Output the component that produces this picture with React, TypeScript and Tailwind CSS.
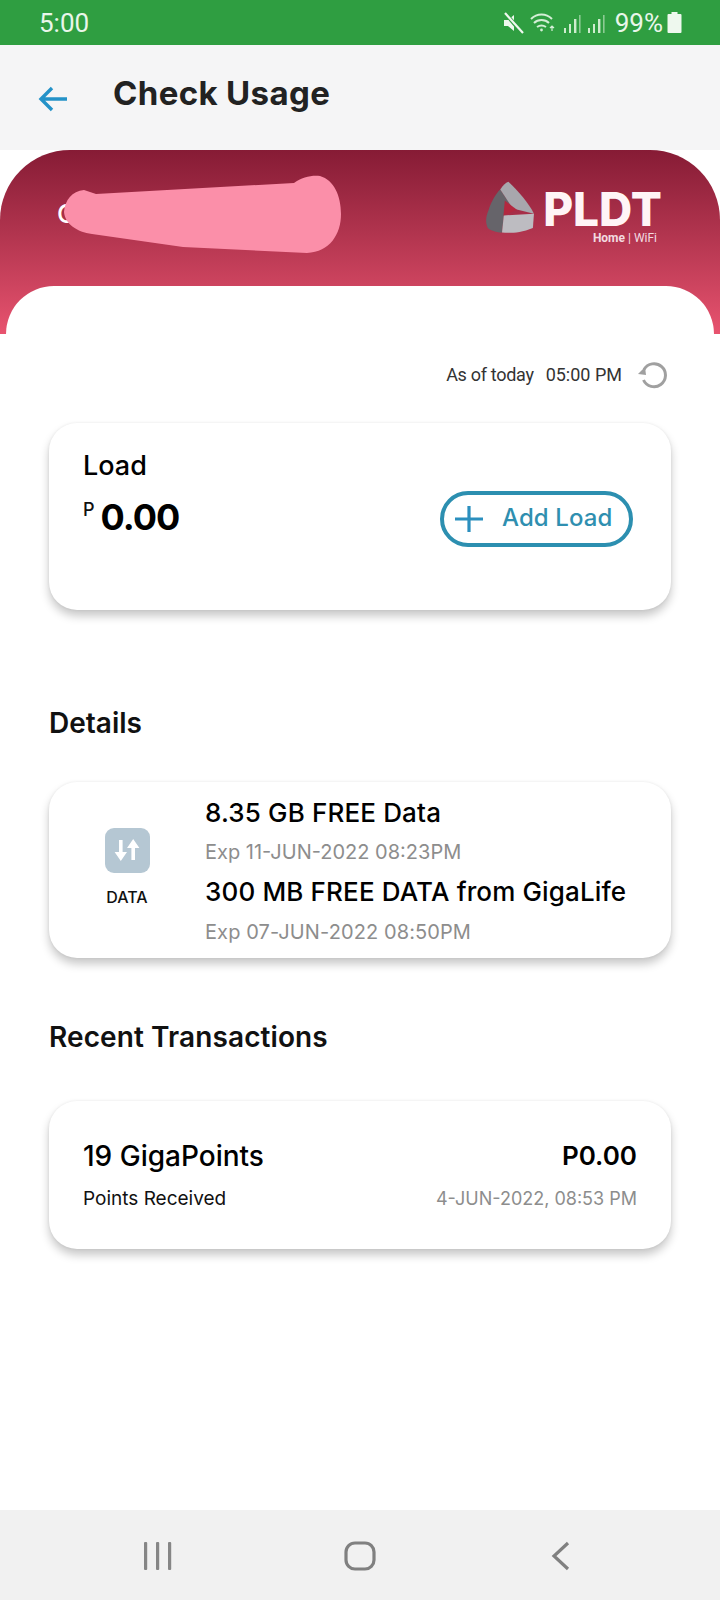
import React from "react";

const sans = "font-['Inter','Noto_Sans',sans-serif]";

function Card({ className, children }: { className: string; children: React.ReactNode }) {
  return (
    <div className={`rounded-[28px] bg-white shadow-[0_6px_10px_rgba(0,0,0,0.22),0_0_3px_rgba(0,0,0,0.07)] ${className}`}>
      {children}
    </div>
  );
}

function StatusIcons() {
  return (
    <div className="flex items-center">
      <svg width="22" height="22" viewBox="0 0 22 22" className="mr-[6px]">
        <path d="M2 8h4l6-5v16l-6-5H2z" fill="#eef8ee" />
        <path d="M4 2l16 19" stroke="#2f9e41" strokeWidth="4" />
        <path d="M3 1l18 20" stroke="#eef8ee" strokeWidth="2.2" />
      </svg>
      <svg width="26" height="22" viewBox="0 0 26 22" fill="none" stroke="#d4eed6" strokeWidth="2" className="mr-[7px]">
        <path d="M1 7c6-6 15-6 21 0" />
        <path d="M4 11c4-4 11-4 15 0" />
        <path d="M7 15c3-2 6-2 9 0" />
        <circle cx="11.5" cy="18" r="1.4" fill="#d4eed6" stroke="none" />
        <path d="M22 19v-5M20 16l2-2 2 2" strokeWidth="1.2" />
      </svg>
      <svg width="20" height="22" viewBox="0 0 20 22" className="mr-[4px]" fill="#cfeccf">
        <rect x="1" y="16" width="2" height="5" />
        <rect x="6" y="12" width="2" height="9" />
        <rect x="11" y="7" width="2.4" height="14" />
        <rect x="16" y="3" width="1.6" height="18" fill="#8ccb93" />
      </svg>
      <svg width="20" height="22" viewBox="0 0 20 22" className="mr-[8px]" fill="#cfeccf">
        <rect x="1" y="16" width="2" height="5" />
        <rect x="6" y="12" width="2" height="9" />
        <rect x="11" y="7" width="2.4" height="14" />
        <rect x="16" y="3" width="1.6" height="18" fill="#8ccb93" />
      </svg>
      <span className="font-['Roboto',sans-serif] text-[26px] leading-none text-[#e9f6ea]">99%</span>
      <svg width="15" height="21" viewBox="0 0 15 21" className="ml-[4px]">
        <path d="M4.5 0h6v2h3a1 1 0 0 1 1 1v17a1 1 0 0 1-1 1h-12a1 1 0 0 1-1-1V3a1 1 0 0 1 1-1h3z" fill="#eef8ee" />
      </svg>
    </div>
  );
}

function Logo() {
  return (
    <div className="flex items-start">
      <svg width="52" height="55" viewBox="0 0 145 155" className="mr-[7px] mt-[-10px]">
        <path d="M45 27L80 80 55 100 50 148C30 147 15 140 10 135 2 120 5 100 12 85 20 60 35 35 45 27Z" fill="#66646a" />
        <path d="M68 5C95 30 125 65 140 95L80 80 45 27C52 15 60 8 68 5Z" fill="#a8a7ad" />
        <path d="M55 100L140 95 137 135C100 150 70 150 50 148Z" fill="#bdbcc1" />
        <path d="M58 58L92 84 54 100Z" fill="#b3283f" />
      </svg>
      <div className="flex flex-col items-end">
        <span className="font-['Inter',sans-serif] text-[46px] font-extrabold leading-[38px] text-[#fff4f6]">PLDT</span>
        <span className="mr-[5px] mt-[4px] font-['Roboto',sans-serif] text-[12px] leading-[12px] text-[#f3dbe0]">
          <span className="font-bold">Home</span> | WiFi
        </span>
      </div>
    </div>
  );
}

export default function App() {
  return (
    <div className={`flex h-[1600px] w-[720px] flex-col overflow-hidden bg-white ${sans}`}>
      <div className="flex h-[45px] shrink-0 items-center justify-between bg-[#2f9e41] pl-[39px] pr-[38px]">
        <span className="font-['Roboto',sans-serif] text-[26px] leading-none text-[#e9f6ea]">5:00</span>
        <StatusIcons />
      </div>

      <div className="flex h-[105px] shrink-0 items-start bg-[#f5f5f6] pl-[38px] pt-[27px]">
        <svg width="30" height="26" viewBox="0 0 30 26" fill="none" stroke="#2492c8" strokeWidth="3.4" className="mt-[14px]">
          <path d="M29 13H3M14 2L3 13l11 11" />
        </svg>
        <h1 className="ml-[45px] text-[33px] font-bold leading-[42px] tracking-[0.35px] text-[#222222]">Check Usage</h1>
      </div>

      <div className="relative flex h-[184px] shrink-0 flex-col rounded-t-[70px] bg-gradient-to-b from-[#861b35] to-[#e8536f]">
        <div className="flex h-[136px] shrink-0 items-start justify-between pl-[57px] pr-[58px] pt-[40px]">
          <span className="mt-[8px] text-[26px] font-medium leading-[32px] text-white">C</span>
          <Logo />
        </div>
        <div className="mx-[6px] h-[48px] shrink-0 rounded-t-[66px] bg-white" />
        <svg width="282" height="82" viewBox="0 0 282 82" className="absolute left-[62px] top-[24px]">
          <path
            d="M2 38C3 26 10 17 22 16L34 20 232 9C240 3 250 1 258 2 272 6 279 22 279 40 279 60 268 78 245 79L121 73 30 60C15 58 3 50 2 38Z"
            fill="#fb8fa9"
          />
        </svg>
      </div>

      <div className="flex shrink-0 items-center justify-end pr-[52px] pt-[27px] font-['Roboto',sans-serif] text-[18px] leading-[28px] text-[#333333]">
        <span className="tracking-[-0.3px]">As of today</span>
        <span className="ml-[12px]">05:00 PM</span>
        <svg width="32" height="28" viewBox="0 0 32 28" fill="none" className="ml-[14px]">
          <path d="M8 8.5a11.5 11.5 0 1 1-.5 10.5" stroke="#a0a0a0" strokeWidth="3" />
          <path d="M2 13l7-7 1 8z" fill="#a0a0a0" />
        </svg>
      </div>

      <Card className="ml-[49px] mt-[34px] flex h-[187px] w-[622px] shrink-0 items-start justify-between pl-[34px] pr-[38px] pt-[26px]">
        <div>
          <div className="text-[27px] font-medium leading-[34px] text-black">Load</div>
          <div className="mt-[12px] flex items-start">
            <span className="mt-[5px] text-[18px] font-medium leading-[20px] text-[#111111]">P</span>
            <span className="ml-[6px] text-[36px] font-bold leading-[44px] tracking-[-1px] text-black">0.00</span>
          </div>
        </div>
        <div className="mt-[42px] flex h-[56px] w-[193px] items-center rounded-full border-[4px] border-[#2c8fb0] pl-[10px]">
          <svg width="30" height="30" viewBox="0 0 30 30" stroke="#2b8fbe" strokeWidth="3.2" fill="none">
            <path d="M15 2v26M1 15h28" />
          </svg>
          <span className="mb-[3px] ml-[18px] text-[24px] font-medium leading-none tracking-[0.1px] text-[#2f8fb0]">Add Load</span>
        </div>
      </Card>

      <h2 className="ml-[49px] mt-[95px] text-[28px] font-semibold leading-[36px] text-[#111111]">Details</h2>

      <Card className="ml-[49px] mt-[41px] flex h-[176px] w-[622px] shrink-0 items-center">
        <div className="flex w-[156px] shrink-0 flex-col items-center pb-[6px]">
          <div className="flex h-[45px] w-[45px] items-center justify-center rounded-[9px] bg-[#b5c7d3]">
            <svg width="28" height="26" viewBox="0 0 28 26" fill="#ffffff">
              <path d="M6 3h3.6v12H14l-6.2 9-6.2-9H6z" />
              <path d="M18.4 23H22V11h4.4l-6.2-9-6.2 9h4.4z" />
            </svg>
          </div>
          <span className="mt-[14px] text-[16px] font-medium leading-[20px] text-[#111111]">DATA</span>
        </div>
        <div className="min-w-0">
          <div className="text-[26px] font-medium leading-[36px] tracking-[0.15px] text-black">8.35 GB FREE Data</div>
          <div className="mt-[7px] text-[20px] leading-[28px] text-[#8d8d8d]">Exp 11-JUN-2022 08:23PM</div>
          <div className="mt-[8px] whitespace-nowrap text-[26px] font-medium leading-[36px] tracking-[0.15px] text-black">300 MB FREE DATA from GigaLife</div>
          <div className="mt-[8px] text-[20px] leading-[28px] tracking-[0.1px] text-[#8d8d8d]">Exp 07-JUN-2022 08:50PM</div>
        </div>
      </Card>

      <h2 className="ml-[49px] mt-[61px] text-[28px] font-semibold leading-[36px] tracking-[0.1px] text-[#111111]">Recent Transactions</h2>

      <Card className="ml-[49px] mt-[46px] flex h-[148px] w-[622px] shrink-0 flex-col justify-center px-[34px]">
        <div className="flex items-center justify-between">
          <span className="text-[28px] font-medium leading-[36px] text-black">19 GigaPoints</span>
          <span className="text-[26px] font-semibold leading-[36px] text-black">P0.00</span>
        </div>
        <div className="mt-[12px] flex items-center justify-between">
          <span className="text-[19px] leading-[26px] text-[#111111]">Points Received</span>
          <span className="text-[18px] leading-[26px] text-[#8d8d8d]">4-JUN-2022, 08:53 PM</span>
        </div>
      </Card>

      <div className="flex-1" />

      <div className="flex h-[90px] shrink-0 items-start bg-[#f1f1f1] pt-[31px]">
        <svg width="28" height="30" viewBox="0 0 28 30" fill="#868686" className="ml-[144px]">
          <rect x="0" y="1" width="3.2" height="28" rx="1" />
          <rect x="12" y="1" width="3.2" height="28" rx="1" />
          <rect x="24" y="1" width="3.2" height="28" rx="1" />
        </svg>
        <svg width="32" height="30" viewBox="0 0 32 30" fill="none" stroke="#808080" strokeWidth="3.2" className="ml-[172px]">
          <rect x="2" y="2" width="28" height="26" rx="9" />
        </svg>
        <svg width="20" height="30" viewBox="0 0 20 30" fill="none" stroke="#808080" strokeWidth="3.2" className="ml-[174px]">
          <path d="M18 2L4 15l14 13" />
        </svg>
      </div>
    </div>
  );
}
